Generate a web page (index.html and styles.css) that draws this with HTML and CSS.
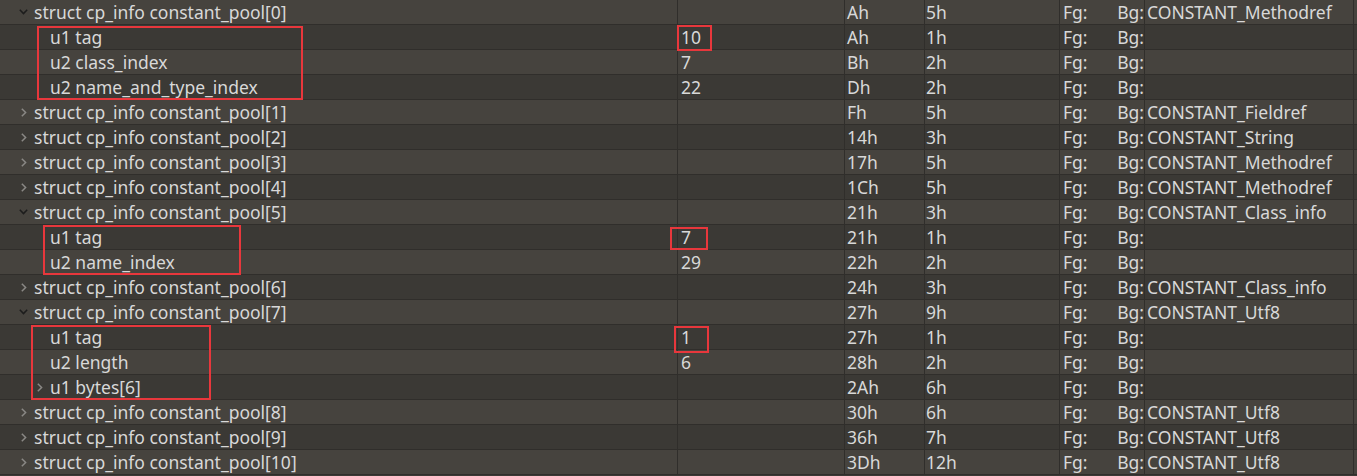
FILE: index.html
```html
<!DOCTYPE html>
<html>
<head>
<meta charset="utf-8">
<link rel="stylesheet" href="styles.css">
</head>
<body>
<div class="grid">
  <div class="row"><div class="c name l1"><span class="tw"><svg class="exp" width="9" height="6" viewBox="0 0 9 6"><polyline points="0.8,0.8 4.5,4.6 8.2,0.8"/></svg></span><span>struct cp_info constant_pool[0]</span></div><div class="c val"></div><div class="c st">Ah</div><div class="c sz">5h</div><div class="c col"><span class="fg">Fg:</span><span class="bg">Bg:</span></div><div class="c cm">CONSTANT_Methodref</div></div>
  <div class="row"><div class="c name l2"><span class="tw"></span><span>u1 tag</span></div><div class="c val">10</div><div class="c st">Ah</div><div class="c sz">1h</div><div class="c col"><span class="fg">Fg:</span><span class="bg">Bg:</span></div><div class="c cm"></div></div>
  <div class="row"><div class="c name l2"><span class="tw"></span><span>u2 class_index</span></div><div class="c val">7</div><div class="c st">Bh</div><div class="c sz">2h</div><div class="c col"><span class="fg">Fg:</span><span class="bg">Bg:</span></div><div class="c cm"></div></div>
  <div class="row"><div class="c name l2"><span class="tw"></span><span>u2 name_and_type_index</span></div><div class="c val">22</div><div class="c st">Dh</div><div class="c sz">2h</div><div class="c col"><span class="fg">Fg:</span><span class="bg">Bg:</span></div><div class="c cm"></div></div>
  <div class="row"><div class="c name l1"><span class="tw"><svg class="col-ic" width="6" height="9" viewBox="0 0 6 9"><polyline points="0.8,0.8 4.6,4.5 0.8,8.2"/></svg></span><span>struct cp_info constant_pool[1]</span></div><div class="c val"></div><div class="c st">Fh</div><div class="c sz">5h</div><div class="c col"><span class="fg">Fg:</span><span class="bg">Bg:</span></div><div class="c cm">CONSTANT_Fieldref</div></div>
  <div class="row"><div class="c name l1"><span class="tw"><svg class="col-ic" width="6" height="9" viewBox="0 0 6 9"><polyline points="0.8,0.8 4.6,4.5 0.8,8.2"/></svg></span><span>struct cp_info constant_pool[2]</span></div><div class="c val"></div><div class="c st">14h</div><div class="c sz">3h</div><div class="c col"><span class="fg">Fg:</span><span class="bg">Bg:</span></div><div class="c cm">CONSTANT_String</div></div>
  <div class="row"><div class="c name l1"><span class="tw"><svg class="col-ic" width="6" height="9" viewBox="0 0 6 9"><polyline points="0.8,0.8 4.6,4.5 0.8,8.2"/></svg></span><span>struct cp_info constant_pool[3]</span></div><div class="c val"></div><div class="c st">17h</div><div class="c sz">5h</div><div class="c col"><span class="fg">Fg:</span><span class="bg">Bg:</span></div><div class="c cm">CONSTANT_Methodref</div></div>
  <div class="row"><div class="c name l1"><span class="tw"><svg class="col-ic" width="6" height="9" viewBox="0 0 6 9"><polyline points="0.8,0.8 4.6,4.5 0.8,8.2"/></svg></span><span>struct cp_info constant_pool[4]</span></div><div class="c val"></div><div class="c st">1Ch</div><div class="c sz">5h</div><div class="c col"><span class="fg">Fg:</span><span class="bg">Bg:</span></div><div class="c cm">CONSTANT_Methodref</div></div>
  <div class="row"><div class="c name l1"><span class="tw"><svg class="exp" width="9" height="6" viewBox="0 0 9 6"><polyline points="0.8,0.8 4.5,4.6 8.2,0.8"/></svg></span><span>struct cp_info constant_pool[5]</span></div><div class="c val"></div><div class="c st">21h</div><div class="c sz">3h</div><div class="c col"><span class="fg">Fg:</span><span class="bg">Bg:</span></div><div class="c cm">CONSTANT_Class_info</div></div>
  <div class="row"><div class="c name l2"><span class="tw"></span><span>u1 tag</span></div><div class="c val">7</div><div class="c st">21h</div><div class="c sz">1h</div><div class="c col"><span class="fg">Fg:</span><span class="bg">Bg:</span></div><div class="c cm"></div></div>
  <div class="row"><div class="c name l2"><span class="tw"></span><span>u2 name_index</span></div><div class="c val">29</div><div class="c st">22h</div><div class="c sz">2h</div><div class="c col"><span class="fg">Fg:</span><span class="bg">Bg:</span></div><div class="c cm"></div></div>
  <div class="row"><div class="c name l1"><span class="tw"><svg class="col-ic" width="6" height="9" viewBox="0 0 6 9"><polyline points="0.8,0.8 4.6,4.5 0.8,8.2"/></svg></span><span>struct cp_info constant_pool[6]</span></div><div class="c val"></div><div class="c st">24h</div><div class="c sz">3h</div><div class="c col"><span class="fg">Fg:</span><span class="bg">Bg:</span></div><div class="c cm">CONSTANT_Class_info</div></div>
  <div class="row"><div class="c name l1"><span class="tw"><svg class="exp" width="9" height="6" viewBox="0 0 9 6"><polyline points="0.8,0.8 4.5,4.6 8.2,0.8"/></svg></span><span>struct cp_info constant_pool[7]</span></div><div class="c val"></div><div class="c st">27h</div><div class="c sz">9h</div><div class="c col"><span class="fg">Fg:</span><span class="bg">Bg:</span></div><div class="c cm">CONSTANT_Utf8</div></div>
  <div class="row"><div class="c name l2"><span class="tw"></span><span>u1 tag</span></div><div class="c val">1</div><div class="c st">27h</div><div class="c sz">1h</div><div class="c col"><span class="fg">Fg:</span><span class="bg">Bg:</span></div><div class="c cm"></div></div>
  <div class="row"><div class="c name l2"><span class="tw"></span><span>u2 length</span></div><div class="c val">6</div><div class="c st">28h</div><div class="c sz">2h</div><div class="c col"><span class="fg">Fg:</span><span class="bg">Bg:</span></div><div class="c cm"></div></div>
  <div class="row"><div class="c name l2"><span class="tw"><svg class="col-ic" width="6" height="9" viewBox="0 0 6 9"><polyline points="0.8,0.8 4.6,4.5 0.8,8.2"/></svg></span><span>u1 bytes[6]</span></div><div class="c val"></div><div class="c st">2Ah</div><div class="c sz">6h</div><div class="c col"><span class="fg">Fg:</span><span class="bg">Bg:</span></div><div class="c cm"></div></div>
  <div class="row"><div class="c name l1"><span class="tw"><svg class="col-ic" width="6" height="9" viewBox="0 0 6 9"><polyline points="0.8,0.8 4.6,4.5 0.8,8.2"/></svg></span><span>struct cp_info constant_pool[8]</span></div><div class="c val"></div><div class="c st">30h</div><div class="c sz">6h</div><div class="c col"><span class="fg">Fg:</span><span class="bg">Bg:</span></div><div class="c cm">CONSTANT_Utf8</div></div>
  <div class="row"><div class="c name l1"><span class="tw"><svg class="col-ic" width="6" height="9" viewBox="0 0 6 9"><polyline points="0.8,0.8 4.6,4.5 0.8,8.2"/></svg></span><span>struct cp_info constant_pool[9]</span></div><div class="c val"></div><div class="c st">36h</div><div class="c sz">7h</div><div class="c col"><span class="fg">Fg:</span><span class="bg">Bg:</span></div><div class="c cm">CONSTANT_Utf8</div></div>
  <div class="row"><div class="c name l1"><span class="tw"><svg class="col-ic" width="6" height="9" viewBox="0 0 6 9"><polyline points="0.8,0.8 4.6,4.5 0.8,8.2"/></svg></span><span>struct cp_info constant_pool[10]</span></div><div class="c val"></div><div class="c st">3Dh</div><div class="c sz">12h</div><div class="c col"><span class="fg">Fg:</span><span class="bg">Bg:</span></div><div class="c cm">CONSTANT_Utf8</div></div>

  <div class="mark" style="left:37px;top:26px;width:266px;height:74px"></div>
  <div class="mark" style="left:677px;top:25px;width:35px;height:26px"></div>
  <div class="mark" style="left:43px;top:225px;width:198px;height:50px"></div>
  <div class="mark" style="left:670px;top:227px;width:38px;height:23px"></div>
  <div class="mark" style="left:31px;top:325px;width:180px;height:75px"></div>
  <div class="mark" style="left:674px;top:326px;width:35px;height:27px"></div>
</div>
</body>
</html>
```

FILE: styles.css
```css
html, body {
  margin: 0;
  padding: 0;
  background: #3b3935;
}
.grid {
  position: relative;
  width: 1357px;
  font-family: "Noto Sans", "Open Sans", sans-serif;
  font-size: 17.5px;
  color: #d8d8d8;
}
.row {
  display: flex;
  height: 24px;
  border-bottom: 1px solid #302e2b;
  background: #46433e;
}
.row:nth-child(even) {
  background: #3b3935;
}
.c {
  box-sizing: border-box;
  height: 24px;
  line-height: 24px;
  white-space: nowrap;
  overflow: hidden;
  border-right: 1px solid #302e2b;
  padding-left: 3px;
}
.name {
  width: 678px;
  display: flex;
  align-items: center;
  padding-left: 15px;
}
.name.l2 {
  padding-left: 31px;
}
.tw {
  width: 17px;
  margin-right: 2px;
  display: flex;
  align-items: center;
  justify-content: center;
  height: 24px;
}
.tw svg {
  display: block;
  fill: none;
  stroke-width: 1.5;
}
.exp {
  stroke: #1c1c1c;
}
.col-ic {
  stroke: #8a8885;
}
.val {
  width: 167px;
  padding-left: 3px;
}
.st {
  width: 80px;
  padding-left: 2px;
}
.sz {
  width: 135px;
  padding-left: 1px;
}
.col {
  width: 85px;
  padding-left: 3px;
  display: flex;
}
.fg {
  width: 55px;
}
.cm {
  width: 209px;
  padding-left: 2px;
}
.mark {
  position: absolute;
  box-sizing: border-box;
  border: 2px solid #e8373c;
}
```
